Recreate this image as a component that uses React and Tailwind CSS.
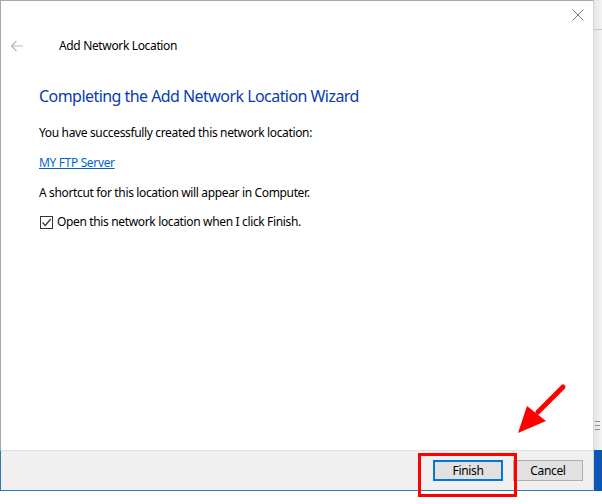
import React from "react";

function BackArrow() {
  return (
    <svg width="14" height="12" viewBox="0 0 14 12" fill="none" stroke="#b8b8b8" strokeWidth="1.2">
      <path d="M13 6H1.5M6.5 1L1.5 6l5 5" />
    </svg>
  );
}

function CloseIcon() {
  return (
    <svg width="12" height="12" viewBox="0 0 12 12" stroke="#7a7a7a" strokeWidth="1">
      <path d="M0.5 0.5L11.5 11.5M11.5 0.5L0.5 11.5" />
    </svg>
  );
}

function CheckBox() {
  return (
    <div className="w-[13px] h-[13px] border border-[#333] bg-white flex items-center justify-center shrink-0">
      <svg width="11" height="11" viewBox="0 0 11 11" fill="none" stroke="#333" strokeWidth="1.2">
        <path d="M1.5 5.5l2.8 3 5.4-6.5" />
      </svg>
    </div>
  );
}

export default function App() {
  return (
    <div
      className="relative w-[602px] h-[504px] flex bg-white overflow-hidden text-[12px] text-black tracking-[-0.35px]"
      style={{ fontFamily: '"Noto Sans", "Open Sans", sans-serif' }}
    >
      {/* dialog */}
      <div className="w-[594px] flex flex-col">
        <div className="h-[450px] border-t border-l border-[#a8a8a8] border-r border-r-[#d8d8d8] flex flex-col">
          <div className="h-[30px] flex justify-end items-start pt-[8px] pr-[9px]">
            <CloseIcon />
          </div>
          <div className="h-[30px] flex items-center">
            <div className="w-[58px] pl-[9px] flex items-center">
              <BackArrow />
            </div>
            <span className="text-[12px] leading-[16px]">Add Network Location</span>
          </div>
          <div className="pl-[38px] pr-[39px] flex flex-col">
            <h1 className="mt-[24px] text-[16px] leading-[22px] text-[#0a3bb0] font-normal tracking-[-0.55px]">
              Completing the Add Network Location Wizard
            </h1>
            <p className="mt-[18px] leading-[16px]">You have successfully created this network location:</p>
            <a className="mt-[14px] leading-[16px] text-[#0066cc] underline self-start">MY FTP Server</a>
            <p className="mt-[14px] leading-[16px]">A shortcut for this location will appear in Computer.</p>
            <div className="mt-[13px] h-[16px] flex items-center gap-[4px] pl-[1px]">
              <CheckBox />
              <span className="leading-[16px]">Open this network location when I click Finish.</span>
            </div>
          </div>
        </div>
        <div className="h-[41px] bg-[#f0f0f0] border-t border-[#dfdfdf] border-l border-l-[#2b7bb0] border-b border-b-[#2b7bb0] border-r border-r-[#d0d0d0] flex items-center justify-end gap-[10px] pr-[10px]">
          <button className="w-[70px] h-[21px] border-2 border-[#0078d7] bg-[#e1e1e1] text-[12px] leading-[16px] flex items-center justify-center">
            Finish
          </button>
          <button className="w-[70px] h-[21px] border border-[#adadad] bg-[#e1e1e1] text-[12px] leading-[16px] flex items-center justify-center">
            Cancel
          </button>
        </div>
        <div className="flex-1 bg-white" />
      </div>

      {/* background strip to the right */}
      <div className="w-[8px] flex flex-col">
        <div className="h-[30px] bg-gradient-to-r from-[#e6e6e6] to-[#f3f3f3] border-b border-[#c8c8c8]" />
        <div className="flex-1 bg-gradient-to-r from-[#e4e4e4] to-[#f2f2f2] flex flex-col justify-end pb-[20px] pl-[1px]">
          <div className="flex flex-col gap-[3px]">
            <div className="w-[5px] h-px bg-[#909090]" />
            <div className="w-[5px] h-px bg-[#909090]" />
            <div className="w-[5px] h-px bg-[#909090]" />
          </div>
        </div>
        <div className="h-[41px] bg-[#0a55b5]" />
        <div className="h-[13px] bg-white" />
      </div>

      {/* annotation overlay */}
      <div className="absolute left-[418px] top-[453px] w-[99px] h-[44px] border-[3px] border-[#ff0000]" />
      <svg className="absolute left-0 top-0" width="602" height="504" viewBox="0 0 602 504" pointerEvents="none">
        <line x1="563" y1="387" x2="538" y2="412" stroke="#ff0000" strokeWidth="5" strokeLinecap="round" />
        <polygon points="518,433 527,406 546,421" fill="#ff0000" />
      </svg>
    </div>
  );
}
